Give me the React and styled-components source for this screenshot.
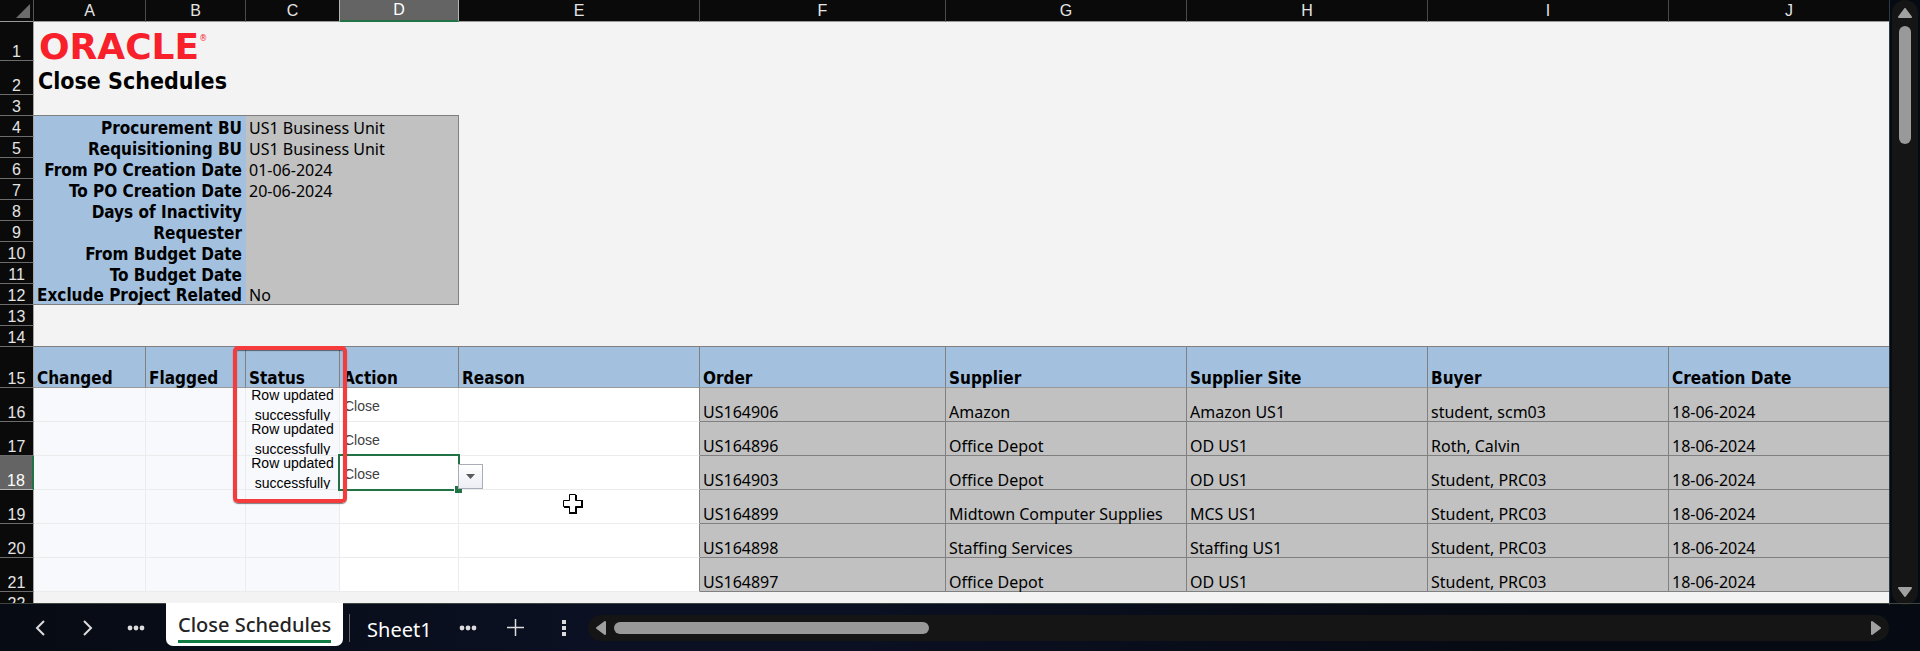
import React from 'react';
import styled, { createGlobalStyle, css } from 'styled-components';

const theme = {
  ink: '#0a0a0a',
  line: '#808080',
  faint: '#ececec',
  blue: '#a3c1df',
  grey: '#c1c1c1',
  green: '#217346',
  text: '"Noto Sans", "Open Sans", sans-serif',
  heading: '"DejaVu Sans Condensed", "DejaVu Sans", sans-serif',
  arial: '"Liberation Sans", Arial, sans-serif'
};

const GlobalStyle = createGlobalStyle`
  body {
    margin: 0;
    background: #060a13;
  }
  * {
    box-sizing: border-box;
  }
  button {
    margin: 0;
    padding: 0;
    border: 0;
    background: none;
    color: inherit;
    font: inherit;
  }
`;

const Workbook = styled.div`
  display: flex;
  flex-direction: column;
  height: 100vh;
  background: linear-gradient(90deg, #070b13 0%, #0b1022 30%, #0b1022 45%, #060a12 80%);
`;

const Main = styled.div`
  display: flex;
  flex: 1;
  min-height: 0;
`;

const Sheet = styled.main`
  position: relative;
  flex: 1;
  min-width: 0;
  overflow: hidden;
  background: #f3f3f3;
`;

// the last column runs on behind the scroll bar
const Grid = styled.table`
  width: calc(100% + 20px);
  table-layout: fixed;
  border-collapse: separate;
  border-spacing: 0;
  font-family: ${theme.text};
  font-size: 16px;
  line-height: 18px;
  color: #000;

  th, td {
    padding: 0 3px;
    vertical-align: bottom;
    text-align: left;
    white-space: nowrap;
  }
`;

const Col = styled.col`
  width: ${props => props.$w}px;
`;

const Row = styled.tr`
  height: ${props => props.$h}px;
`;

const headFont = css`
  background: ${theme.ink};
  color: #e4e4e4;
  font-family: ${theme.arial};
  font-weight: 400;
`;

const boldFont = css`
  font-family: ${theme.heading};
  font-size: 17px;
  font-weight: 700;
`;

const Corner = styled.td`
  ${headFont}
  border-right: 1px solid #555;
  border-bottom: 1px solid #999;

  svg {
    display: block;
    margin: 0 0 3px auto;
  }
`;

const ColHead = styled.th`
  && {
    ${headFont}
    border-right: 1px solid ${props => props.$next ? '#b5b5b5' : '#4a4a4a'};
    border-bottom: 1px solid #999;
    text-align: center;
    vertical-align: middle;
    ${props => props.$active && css`
      background: #646464;
      color: #fff;
      border-right-color: #b5b5b5;
      border-bottom: 2px solid ${theme.green};
    `}
    &:last-child {
      border-right: 0;
    }
  }
`;

const RowHead = styled.th`
  && {
    ${headFont}
    padding: 0;
    line-height: 16px;
    text-align: center;
    border-right: 1px solid #a6a6a6;
    border-bottom: 1px solid #6c6c6c;
    ${props => props.$active && css`
      background: #646464;
      color: #fff;
      border-right: 2px solid ${theme.green};
      border-bottom-color: #b5b5b5;
    `}
  }
`;

const Blank = styled.td`
  background: #f3f3f3;
  ${props => props.$ruled && `border-bottom: 1px solid ${theme.line};`}
`;

const Brand = styled.div`
  display: flex;
  padding-left: 2px;
  font-family: "DejaVu Sans", sans-serif;
  font-size: 36px;
  font-weight: 700;
  line-height: 28px;
  color: #f8202a;

  sup {
    font-size: 8px;
    line-height: 12px;
    font-weight: 400;
  }
`;

const Title = styled.h1`
  margin: 0;
  padding-left: 1px;
  font-family: ${theme.heading};
  font-size: 23px;
  font-weight: 700;
  line-height: 28px;
`;

const ParamLabel = styled.th`
  && {
    ${boldFont}
    padding-right: 4px;
    background: ${theme.blue};
    text-align: right;
    ${props => props.$last && `border-bottom: 1px solid ${theme.line};`}
  }
`;

const ParamValue = styled.td`
  background: ${theme.grey};
  border-right: 1px solid ${theme.line};
  ${props => props.$last && `border-bottom: 1px solid ${theme.line};`}
`;

const FieldHead = styled.th`
  ${boldFont}
  position: relative;
  background: ${theme.blue};
  border-right: 1px solid ${theme.line};
  border-bottom: 1px solid #999;
  &:last-child {
    border-right: 0;
  }
`;

const InputCell = styled.td`
  position: relative;
  background: ${props => props.$tint ? '#f8f9fd' : '#fff'};
  border-right: 1px solid ${props => props.$edge ? theme.line : theme.faint};
  border-bottom: 1px solid ${theme.faint};
`;

const DataCell = styled.td`
  background: ${theme.grey};
  border-right: 1px solid ${theme.line};
  border-bottom: 1px solid ${theme.line};
  &:last-child {
    border-right: 0;
  }
`;

const CellText = styled.div`
  display: flex;
  align-items: center;
  height: 33px;
  overflow: hidden;
  font-family: ${theme.arial};
  font-size: 14px;
  line-height: 20px;
`;

const StatusText = styled(CellText)`
  justify-content: center;
  text-align: center;
  white-space: normal;
`;

const ActionText = styled(CellText)`
  padding: 2px 0 0 1px;
  color: #404040;
`;

const Highlight = styled.span`
  position: absolute;
  z-index: 3;
  top: -1px;
  left: -13px;
  width: 114px;
  height: 157px;
  border: 4px solid #f53b3b;
  border-radius: 5px;
  box-shadow: 0 1px 1px rgba(0, 0, 0, .5), inset 0 1px 1px rgba(0, 0, 0, .5);
  pointer-events: none;
`;

const Selection = styled.span`
  position: absolute;
  z-index: 1;
  inset: -2px;
  border: 2px solid ${theme.green};

  &::after {
    content: '';
    position: absolute;
    right: -4px;
    bottom: -4px;
    width: 7px;
    height: 7px;
    background: ${theme.green};
    border: solid #fff;
    border-width: 1px 0 0 1px;
  }
`;

const DropButton = styled.button`
  position: absolute;
  z-index: 2;
  left: 100%;
  bottom: 0;
  display: grid;
  place-items: center;
  width: 25px;
  height: 25px;
  border: 1px solid #a9adb8;
  background: linear-gradient(#fff, #eceef5);
`;

const Pointer = styled.svg`
  position: absolute;
  z-index: 4;
  left: 562px;
  top: 493px;
`;

const SideBar = styled.div`
  display: flex;
  flex: none;
  width: 31px;
  padding: 0 2px 0 2px;
  margin-bottom: -2px;
  border-left: 1px solid #2b3b45;
`;

const Track = styled.div`
  display: flex;
  flex: 1;
  align-items: center;
  gap: 8px;
  border-radius: 13px;
  background: #151515;
  flex-direction: ${props => props.$vertical ? 'column' : 'row'};
  padding: ${props => props.$vertical ? '8px 0' : '0 8px'};
  ${props => !props.$vertical && 'height: 26px;'}

  svg {
    display: block;
  }
`;

const Thumb = styled.div`
  border-radius: 6px;
  background: #999;
  ${props => props.$vertical
    ? 'width: 12px; height: 20%; margin-bottom: auto;'
    : 'height: 12px; width: 24.5%; margin-right: auto;'}
`;

const TabBar = styled.footer`
  display: flex;
  flex: none;
  align-items: center;
  height: 48px;
  padding-right: 31px;
  border-top: 1px solid #3f463f;
  color: #dcdcdc;
`;

const IconButton = styled.button`
  display: grid;
  place-items: center;
  width: 48px;
  height: 40px;
`;

const TabNav = styled.div`
  display: flex;
  padding: 0 6px 0 16px;
`;

const Tab = styled.button`
  align-self: flex-start;
  height: 43px;
  margin-top: -1px;
  padding: 0 12px;
  border-radius: 0 0 7px 7px;
  background: #fff;
  color: #242424;
  font-family: ${theme.text};
  font-size: 20px;
  font-weight: 500;

  span {
    display: block;
    padding-top: 4px;
    line-height: 30px;
    border-bottom: 3px solid #107c41;
  }
`;

const PlainTab = styled.button`
  height: 28px;
  margin-left: 6px;
  padding: 0 12px 0 17px;
  border-left: 1px solid #666;
  color: #fff;
  font-family: ${theme.text};
  font-size: 20px;
  line-height: 32px;
`;

const columns = [
  ['A', 112], ['B', 100], ['C', 94], ['D', 119], ['E', 241],
  ['F', 246], ['G', 241], ['H', 241], ['I', 241], ['J']
];

const params = [
  ['Procurement BU', 'US1 Business Unit'],
  ['Requisitioning BU', 'US1 Business Unit'],
  ['From PO Creation Date', '01-06-2024'],
  ['To PO Creation Date', '20-06-2024'],
  ['Days of Inactivity', ''],
  ['Requester', ''],
  ['From Budget Date', ''],
  ['To Budget Date', ''],
  ['Exclude Project Related', 'No']
];

const fields = [
  'Changed', 'Flagged', 'Status', 'Action', 'Reason',
  'Order', 'Supplier', 'Supplier Site', 'Buyer', 'Creation Date'
];

const done = 'Row updated successfully';

const schedules = [
  { status: done, action: 'Close', data: ['US164906', 'Amazon', 'Amazon US1', 'student, scm03', '18-06-2024'] },
  { status: done, action: 'Close', data: ['US164896', 'Office Depot', 'OD US1', 'Roth, Calvin', '18-06-2024'] },
  { status: done, action: 'Close', selected: true, data: ['US164903', 'Office Depot', 'OD US1', 'Student, PRC03', '18-06-2024'] },
  { data: ['US164899', 'Midtown Computer Supplies', 'MCS US1', 'Student, PRC03', '18-06-2024'] },
  { data: ['US164898', 'Staffing Services', 'Staffing US1', 'Student, PRC03', '18-06-2024'] },
  { data: ['US164897', 'Office Depot', 'OD US1', 'Student, PRC03', '18-06-2024'] }
];

const angles = { up: 0, right: 90, down: 180, left: 270 };

const Arrow = ({ to }) => {
  const upright = to === 'up' || to === 'down';
  return (
    <button aria-label={'Scroll ' + to}>
      <svg
        width={upright ? 14 : 10}
        height={upright ? 10 : 14}
        viewBox={upright ? '-7 -5 14 10' : '-5 -7 10 14'}
      >
        <path d="M0 -4L6 4H-6Z" fill="#a0a0a0" stroke="#a0a0a0" strokeWidth="2" strokeLinejoin="round" transform={`rotate(${angles[to]})`} />
      </svg>
    </button>
  );
};

const Dots = () => (
  <svg width="18" height="6" fill="currentColor">
    <circle cx="3" cy="3" r="2.4" />
    <circle cx="9" cy="3" r="2.4" />
    <circle cx="15" cy="3" r="2.4" />
  </svg>
);

const ScheduleRow = ({ index, row }) => (
  <Row $h={34}>
    <RowHead scope="row" $active={row.selected}>{index}</RowHead>
    <InputCell $tint />
    <InputCell $tint />
    <InputCell $tint>
      {row.status && <StatusText>{row.status}</StatusText>}
    </InputCell>
    <InputCell>
      {row.action && <ActionText>{row.action}</ActionText>}
      {row.selected && <Selection />}
      {row.selected && (
        <DropButton aria-label="Choose action">
          <svg width="9" height="5"><path d="M0 0H9L4.500 5Z" fill="#5a5a5a" /></svg>
        </DropButton>
      )}
    </InputCell>
    <InputCell $edge />
    {row.data.map((value, i) => <DataCell key={i}>{value}</DataCell>)}
  </Row>
);

const App = () => (
  <Workbook>
    <GlobalStyle />
    <Main>
      <Sheet>
        <Grid>
          <colgroup>
            <Col $w={34} />
            {columns.map(([name, w]) => w ? <Col key={name} $w={w} /> : <col key={name} />)}
          </colgroup>
          <thead>
            <Row $h={22}>
              <Corner>
                <svg width="14" height="14"><path d="M14 0V14H0Z" fill="#6b6b6b" /></svg>
              </Corner>
              {columns.map(([name]) => (
                <ColHead key={name} scope="col" $active={name === 'D'} $next={name === 'C'}>{name}</ColHead>
              ))}
            </Row>
          </thead>
          <tbody>
            <Row $h={39}>
              <RowHead scope="row">1</RowHead>
              <Blank colSpan={10}><Brand>ORACLE<sup>®</sup></Brand></Blank>
            </Row>
            <Row $h={34}>
              <RowHead scope="row">2</RowHead>
              <Blank colSpan={10}><Title>Close Schedules</Title></Blank>
            </Row>
            <Row $h={21}>
              <RowHead scope="row">3</RowHead>
              <Blank colSpan={4} $ruled />
              <Blank colSpan={6} />
            </Row>
            {params.map(([label, value], i) => (
              <Row key={label} $h={21}>
                <RowHead scope="row">{i + 4}</RowHead>
                <ParamLabel colSpan={2} $last={i === params.length - 1}>{label}</ParamLabel>
                <ParamValue colSpan={2} $last={i === params.length - 1}>{value}</ParamValue>
                <Blank colSpan={6} />
              </Row>
            ))}
            <Row $h={21}>
              <RowHead scope="row">13</RowHead>
              <Blank colSpan={10} />
            </Row>
            <Row $h={21}>
              <RowHead scope="row">14</RowHead>
              <Blank colSpan={10} $ruled />
            </Row>
            <Row $h={41}>
              <RowHead scope="row">15</RowHead>
              {fields.map(name => (
                <FieldHead key={name} scope="col">
                  {name}
                  {name === 'Status' && <Highlight />}
                </FieldHead>
              ))}
            </Row>
            {schedules.map((row, i) => <ScheduleRow key={i} index={i + 16} row={row} />)}
            <Row $h={21}>
              <RowHead scope="row">22</RowHead>
              <Blank colSpan={10} />
            </Row>
          </tbody>
        </Grid>
        <Pointer width="22" height="22" aria-hidden="true">
          <path d="M7 2H15V7H21V15H15V21H7V15H2V7H7Z" fill="#000" />
          <path d="M7.500 1.500H13.500V7.500H19.500V13.500H13.500V19.500H7.500V13.500H1.500V7.500H7.500Z" fill="#fff" stroke="#000" />
        </Pointer>
      </Sheet>
      <SideBar>
        <Track $vertical>
          <Arrow to="up" />
          <Thumb $vertical />
          <Arrow to="down" />
        </Track>
      </SideBar>
    </Main>
    <TabBar>
      <TabNav>
        <IconButton aria-label="Previous sheet">
          <svg width="10" height="16" fill="none" stroke="currentColor" strokeWidth="2"><path d="M9 1L2 8L9 15" /></svg>
        </IconButton>
        <IconButton aria-label="Next sheet">
          <svg width="10" height="16" fill="none" stroke="currentColor" strokeWidth="2"><path d="M1 1L8 8L1 15" /></svg>
        </IconButton>
        <IconButton aria-label="More sheets"><Dots /></IconButton>
      </TabNav>
      <Tab><span>Close Schedules</span></Tab>
      <PlainTab>Sheet1</PlainTab>
      <IconButton aria-label="All sheets"><Dots /></IconButton>
      <IconButton aria-label="Add sheet">
        <svg width="17" height="17" stroke="currentColor" strokeWidth="1.500"><path d="M8.500 0V17M0 8.500H17" /></svg>
      </IconButton>
      <IconButton aria-label="Resize tabs">
        <svg width="4" height="16" fill="currentColor"><path d="M0 0H4V4H0ZM0 6H4V10H0ZM0 12H4V16H0Z" /></svg>
      </IconButton>
      <Track>
        <Arrow to="left" />
        <Thumb />
        <Arrow to="right" />
      </Track>
    </TabBar>
  </Workbook>
);

export default App;
